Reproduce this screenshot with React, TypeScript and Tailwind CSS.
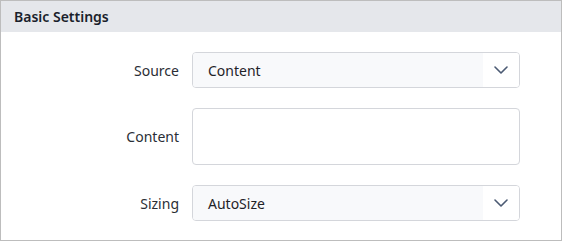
import React from "react";

function Chevron() {
  return (
    <svg width="14" height="8" viewBox="0 0 14 8" fill="none">
      <path d="M1 1L7 7L13 1" stroke="#4b5a73" strokeWidth="1.6" strokeLinecap="round" strokeLinejoin="round" />
    </svg>
  );
}

function Select({ value }: { value: string }) {
  return (
    <div className="flex h-[36px] w-[328px] overflow-hidden rounded-[4px] border border-[#d4d6db] bg-white">
      <div className="flex flex-1 items-center bg-[#f8f9fb] pl-[15px] text-[14px] text-[#1f2328]">{value}</div>
      <div className="flex w-[36px] items-center justify-center bg-white">
        <Chevron />
      </div>
    </div>
  );
}

export default function App() {
  return (
    <div className="h-[241px] w-[563px] bg-white" style={{ fontFamily: '"Noto Sans", "Open Sans", sans-serif' }}>
      <div className="h-[241px] w-[562px] border border-[#bdbdbd]">
        <div className="flex h-[31px] items-center bg-[#e5e7eb] px-[13px] text-[14px] font-semibold text-[#1a1f2b]">
          Basic Settings
        </div>
        <div className="flex flex-col gap-[20px] pt-[20px]">
          <div className="flex items-center">
            <div className="w-[178px] text-right text-[14px] text-[#2a2e35]">Source</div>
            <div className="ml-[13px]">
              <Select value="Content" />
            </div>
          </div>
          <div className="flex items-center">
            <div className="w-[178px] text-right text-[14px] text-[#2a2e35]">Content</div>
            <div className="ml-[13px] h-[57px] w-[328px] rounded-[4px] border border-[#d4d6db] bg-white" />
          </div>
          <div className="flex items-center">
            <div className="w-[178px] text-right text-[14px] text-[#2a2e35]">Sizing</div>
            <div className="ml-[13px]">
              <Select value="AutoSize" />
            </div>
          </div>
        </div>
      </div>
    </div>
  );
}
